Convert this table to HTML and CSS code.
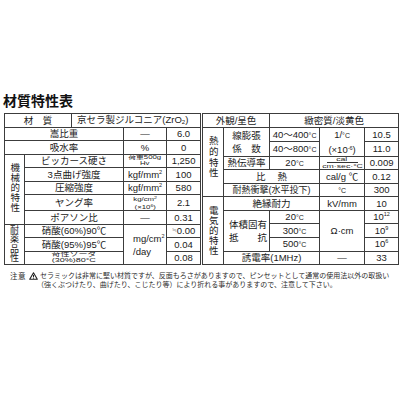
FILE: index.html
```html
<!DOCTYPE html>
<html lang="ja">
<head>
<meta charset="utf-8">
<title>材質特性表</title>
<link rel="stylesheet" href="styles.css">
</head>
<body>
<div class="page">
  <h1 class="title">材質特性表</h1>
  <div class="tables">
    <table class="spec">
      <colgroup><col class="cl1"><col class="cl2"><col class="cl3"><col class="cl4"><col class="cl5"></colgroup>
      <tr><td colspan="2">材　質</td><td colspan="3" class="lft">京セラ製ジルコニア(ZrO<span class="sub">2</span>)</td></tr>
      <tr><td colspan="3">嵩比重</td><td>—</td><td>6.0</td></tr>
      <tr><td colspan="3">吸水率</td><td>%</td><td>0</td></tr>
      <tr><td rowspan="5" class="cat"><span class="vt">機械的特性</span></td><td colspan="2">ビッカース硬さ</td><td><div class="stack"><span class="sx13">荷重500g</span><br><span class="sx13">Hv</span></div></td><td>1,250</td></tr>
      <tr><td colspan="2">3点曲げ強度</td><td>kgf/mm<span class="sup">2</span></td><td>100</td></tr>
      <tr><td colspan="2">圧縮強度</td><td>kgf/mm<span class="sup">2</span></td><td>580</td></tr>
      <tr><td colspan="2">ヤング率</td><td><div class="stack"><span class="sx13">kg/cm<span class="sup">2</span></span><br><span class="sx13">(×10<span class="sup">6</span>)</span></div></td><td>2.1</td></tr>
      <tr><td colspan="2">ポアソン比</td><td>—</td><td>0.31</td></tr>
      <tr><td rowspan="3" class="cat"><span class="vt vt2">耐薬品性</span></td><td colspan="2">硝酸(60%)90℃</td><td rowspan="3" class="lft unit"><div>mg/cm<span class="sup">2</span></div><div>/day</div></td><td><span class="approx">≒</span>0.00</td></tr>
      <tr><td colspan="2">硝酸(95%)95℃</td><td>0.04</td></tr>
      <tr><td colspan="2"><div class="stack"><span class="sx15">苛性ソーダ</span><br><span class="sx15">(30%)80°C</span></div></td><td>0.08</td></tr>
    </table>
    <table class="spec">
      <colgroup><col class="cr1"><col class="cr2"><col class="cr3"><col class="cr4"><col class="cr5"></colgroup>
      <tr><td colspan="2">外観/呈色</td><td colspan="3">緻密質/淡黄色</td></tr>
      <tr><td rowspan="5" class="cat"><span class="vt vt3">熱的特性</span></td><td rowspan="2"><div class="jblock"><div>線膨張</div><div class="just"><span>係</span><span>数</span></div></div></td><td>40〜400<span class="sm">°C</span></td><td rowspan="2"><div class="twoline"><div>1/<span class="sm">°C</span></div><div>(×10<span class="sup">-6</span>)</div></div></td><td>10.5</td></tr>
      <tr><td>40〜800<span class="sm">°C</span></td><td>11.0</td></tr>
      <tr><td>熱伝導率</td><td>20<span class="sm">°C</span></td><td><div class="frac"><span class="sx15 num">cal</span><span class="den"><span class="sx15">cm·sec·°C</span></span></div></td><td>0.009</td></tr>
      <tr><td colspan="2">比　 熱</td><td>cal/g ℃</td><td>0.12</td></tr>
      <tr><td colspan="2" class="small9">耐熱衝撃(水平投下)</td><td><span class="sm">°C</span></td><td>300</td></tr>
      <tr><td rowspan="5" class="cat"><span class="vt vt4">電気的特性</span></td><td colspan="2">絶縁耐力</td><td>kV/mm</td><td>10</td></tr>
      <tr><td rowspan="3" class="lft"><div class="jblock jb4"><div>体積固有</div><div class="just"><span>抵</span><span>抗</span></div></div></td><td>20<span class="sm">°C</span></td><td rowspan="3">Ω·cm</td><td>10<span class="sup">12</span></td></tr>
      <tr><td>300<span class="sm">°C</span></td><td>10<span class="sup">9</span></td></tr>
      <tr><td>500<span class="sm">°C</span></td><td>10<span class="sup">6</span></td></tr>
      <tr><td colspan="2">誘電率(1MHz)</td><td>—</td><td>33</td></tr>
    </table>
  </div>
  <div class="note">
    <span class="lbl">注意</span>
    <svg class="warn" width="9" height="8" viewBox="0 0 9 8"><path d="M4.5 0.8 L8.3 7.3 H0.7 Z" fill="none" stroke="#222" stroke-width="1.1" stroke-linejoin="round"/><path d="M4.5 2.9 V5.2" stroke="#222" stroke-width="1"/><rect x="4" y="5.7" width="1" height="0.9" fill="#222"/></svg>
    <div class="ntext">
      <div class="nline">セラミックは非常に堅い材質ですが、反面もろさがありますので、ピンセットとして通常の使用法以外の取扱い</div>
      <div class="nline nline2">（強くぶつけたり、曲げたり、こじたり等）により折れる事がありますので、注意して下さい。</div>
    </div>
  </div>
</div>
</body>
</html>
```

FILE: styles.css
```css
* { box-sizing: border-box; }
html, body { margin: 0; padding: 0; background: #fff; }
body {
  font-family: "Liberation Sans", "Noto Sans CJK JP", sans-serif;
  color: #1a1a1a;
}
.page { width: 400px; padding: 92px 3px 0 4px; }
.title {
  margin: 0 0 5px -1px;
  font-family: "Noto Sans CJK JP", sans-serif;
  font-weight: 700;
  font-size: 14px;
  line-height: 16px;
  color: #111;
}
.tables { display: flex; gap: 1px; width: 393px; }
.spec {
  border-collapse: collapse;
  table-layout: fixed;
  width: 196px;
  font-size: 9.5px;
  line-height: 1;
}
.spec tr { height: 13.5px; }
.spec td {
  border: 1px solid #3c3c3c;
  padding: 0;
  text-align: center;
  vertical-align: middle;
  white-space: nowrap;
  overflow: hidden;
}
.cl1 { width: 20px; } .cl2 { width: 47px; } .cl3 { width: 52px; } .cl4 { width: 43px; } .cl5 { width: 34px; }
.cr1 { width: 21px; } .cr2 { width: 46px; } .cr3 { width: 50px; } .cr4 { width: 45px; } .cr5 { width: 34px; }
.spec td.lft { text-align: left; padding-left: 5px; }
.spec td.unit { padding-left: 9px; line-height: 13px; }
.cat { font-family: "Noto Sans CJK JP", sans-serif; }
.vt {
  display: inline-block;
  writing-mode: vertical-rl;
  text-orientation: upright;
  font-size: 9.5px;
  line-height: 1;
  letter-spacing: 0.5px;
}
.vt2 { font-size: 9px; letter-spacing: 0.4px; }
.vt3 { letter-spacing: 1.2px; margin-top: -7px; }
.vt4 { letter-spacing: 0.3px; }
.sub { font-size: 6px; vertical-align: -1px; }
.sup { font-size: 5.5px; vertical-align: 4px; }
.sm { font-size: 7px; }
.approx { font-size: 6px; vertical-align: 2px; }
.small9 { font-size: 9px; }
.stack { font-size: 6px; line-height: 5.6px; }
.stack .sup { font-size: 4px; vertical-align: 2px; }
.sx13 { display: inline-block; transform: scaleX(1.3); }
.sx15 { display: inline-block; transform: scaleX(1.5); }
.twoline { line-height: 13px; }
.twoline .sup { vertical-align: 3px; }
.frac { display: flex; flex-direction: column; align-items: center; font-size: 5.8px; line-height: 5.2px; }
.frac .den { border-top: 0.6px solid #333; padding: 0.4px 2px 0; }
.jblock { display: inline-block; width: 28.5px; line-height: 13px; text-align: left; font-family: "Noto Sans CJK JP", sans-serif; }
.jb4 { width: 38px; }
.just { display: flex; justify-content: space-between; }
.note {
  display: flex;
  align-items: flex-start;
  margin: 6px 0 0 6px;
  font-family: "Noto Sans CJK JP", sans-serif;
  font-size: 7px;
  line-height: 9px;
  color: #2a2a2a;
}
.lbl { font-size: 7.5px; letter-spacing: 0.5px; flex: none; }
.warn { margin: 0.5px 2px 0 3px; flex: none; }
.ntext { flex: none; }
.nline { white-space: nowrap; }
.nline2 { margin-left: -3px; }
```
